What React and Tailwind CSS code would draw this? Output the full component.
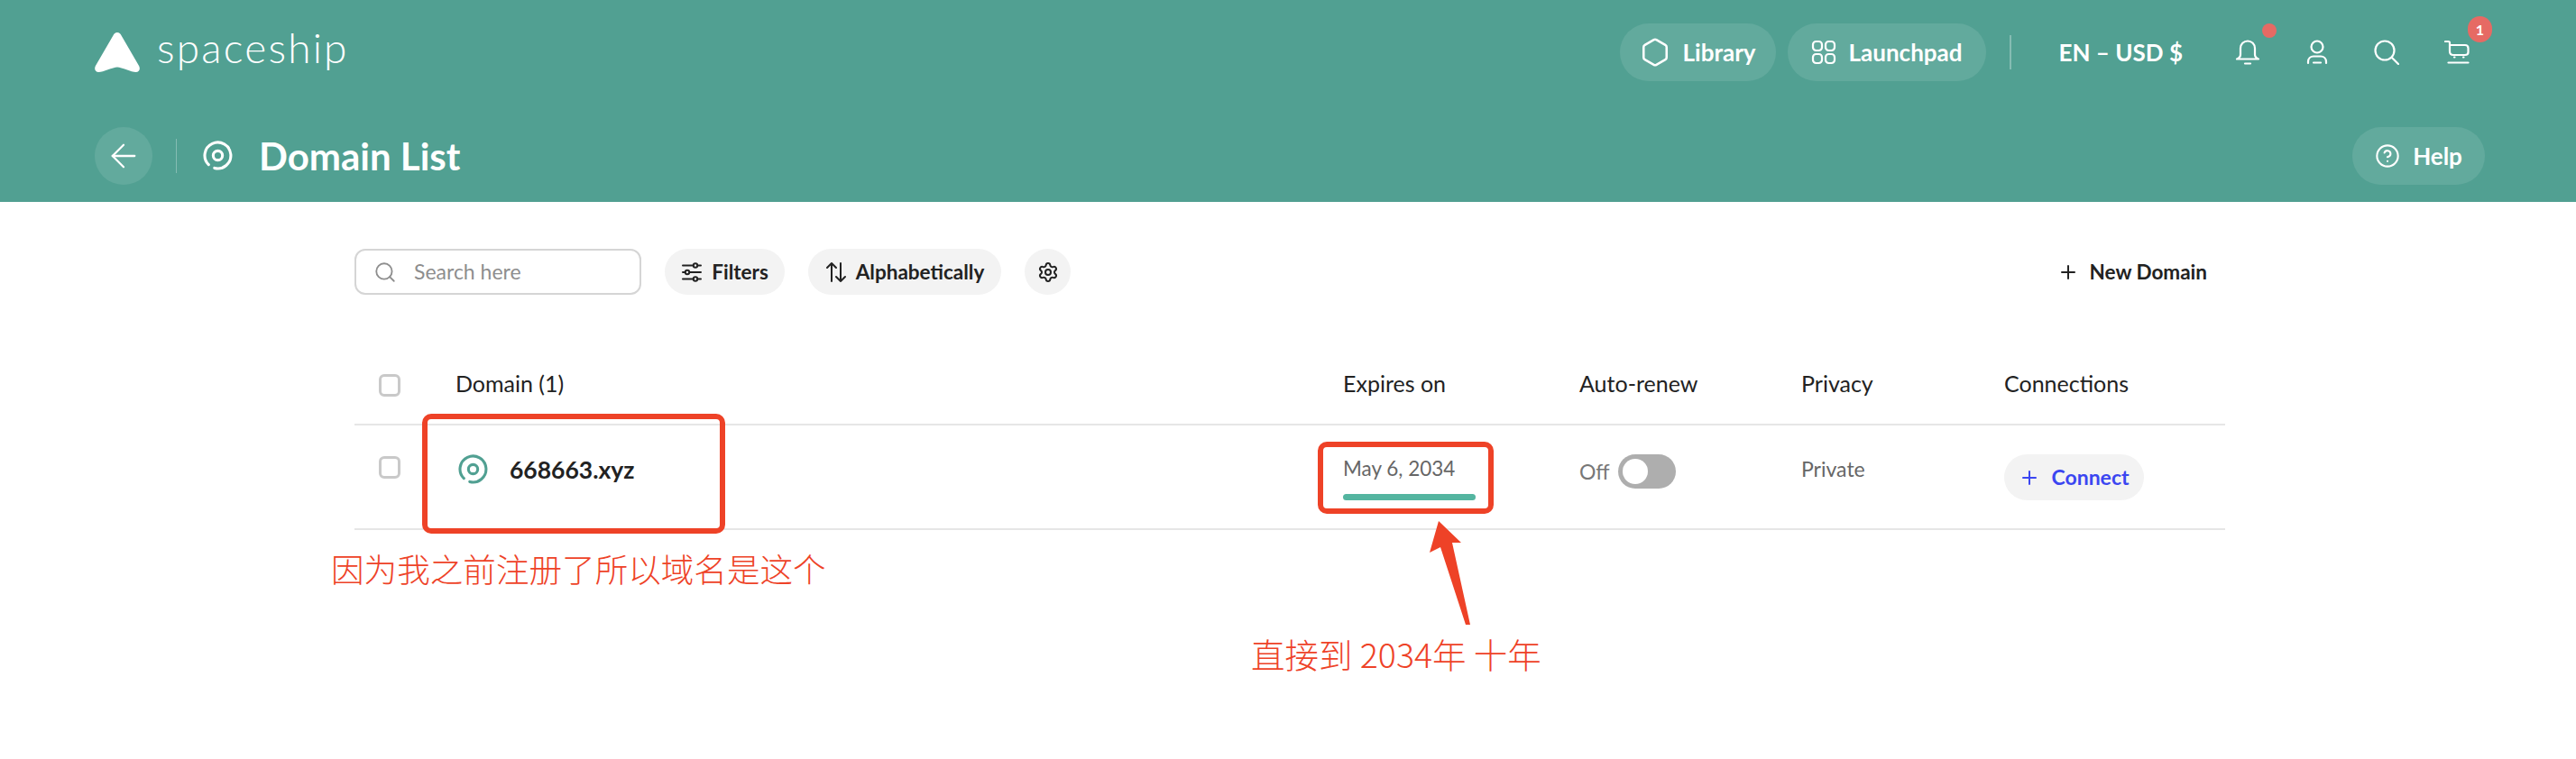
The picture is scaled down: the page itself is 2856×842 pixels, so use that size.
import React from "react";
import { ArrowLeft, CircleHelp, Hexagon, Plus, Search, Settings } from "lucide-react";

const sans = "font-['Lato','Noto_Sans',sans-serif]";

const DomainIcon = ({ className }) => (
  <svg viewBox="0 0 32 32" fill="none" stroke="currentColor" strokeWidth="3" strokeLinecap="round" className={className}>
    <circle cx="16" cy="16" r="5" />
    <path d="M6.100 25.900A14 14 0 1 1 12.400 29.500" />
  </svg>
);

const Logo = () => (
  <svg viewBox="0 0 50 44" className="h-[44px] w-[50px]" fill="white">
    <path d="M25 0c2.200 0 3.600 1.400 4.600 3.600l19.600 33.600c1.600 3.600.2 6.800-3.600 6.800-5 0-15.600-5.600-20.600-5.600S9.400 44 4.400 44C.6 44-.8 40.800.8 37.200L20.400 3.600C21.400 1.400 22.800 0 25 0z" />
  </svg>
);

const GridIcon = () => (
  <svg viewBox="0 0 28 28" fill="none" stroke="white" strokeWidth="2.2" className="h-[28px] w-[28px]">
    <rect x="2" y="2" width="10" height="10" rx="3.500" />
    <rect x="16" y="2" width="10" height="10" rx="3.500" />
    <rect x="2" y="16" width="10" height="10" rx="3.500" />
    <rect x="16" y="16" width="10" height="10" rx="3.500" />
  </svg>
);

const BellIcon = () => (
  <svg viewBox="0 0 28 28" fill="none" stroke="white" strokeWidth="2.2" strokeLinecap="round" strokeLinejoin="round" className="h-[28px] w-[28px]">
    <path d="M14 1.500a8 8 0 0 0-8 8v7c0 2.500-1.500 4-4 5h24c-2.500-1-4-2.500-4-5v-7a8 8 0 0 0-8-8z" />
    <path d="M11 26.500h6" />
  </svg>
);

const UserIcon = () => (
  <svg viewBox="0 0 28 28" fill="none" stroke="white" strokeWidth="2.2" strokeLinecap="round" className="h-[28px] w-[28px]">
    <circle cx="14" cy="8" r="6.500" />
    <path d="M4 26v-1.500c0-3.500 2.500-6 6-6h8c3.500 0 6 2.500 6 6V26" />
    <path d="M10 25.500h8" />
  </svg>
);

const SearchIcon = () => (
  <svg viewBox="0 0 28 28" fill="none" stroke="white" strokeWidth="2.2" strokeLinecap="round" className="h-[28px] w-[28px]">
    <circle cx="12" cy="12" r="10.500" />
    <path d="M20 20l7 7" />
  </svg>
);

const CartIcon = () => (
  <svg viewBox="0 0 28 28" fill="none" stroke="white" strokeWidth="2.2" strokeLinecap="round" strokeLinejoin="round" className="h-[28px] w-[28px]">
    <path d="M1 2h3.500c1 0 1.500.5 1.500 1.500V13c0 2.500 1.500 4 4 4h13c2.500 0 3.500-1 3.500-3V9.500C26.500 7 25.500 6 23 6H6" />
    <path d="M4.500 25.500h22" />
    <path d="M11 19.500h.5M21 19.500h.5" />
  </svg>
);

const SortIcon = () => (
  <svg viewBox="0 0 24 24" fill="none" stroke="#222" strokeWidth="2" strokeLinecap="round" strokeLinejoin="round" className="h-[24px] w-[24px]">
    <path d="M7 22V2M2 7l5-5 5 5" />
    <path d="M17 2v20M12 17l5 5 5-5" />
  </svg>
);

const SlidersIcon = () => (
  <svg viewBox="0 0 24 24" fill="none" stroke="#222" strokeWidth="2" strokeLinecap="round" className="h-[24px] w-[24px]">
    <path d="M2 4.500h20M2 12h20M2 19.500h20" />
    <circle cx="16" cy="4.500" r="2.200" fill="#f3f3f3" />
    <circle cx="7" cy="12" r="2.200" fill="#f3f3f3" />
    <circle cx="16" cy="19.500" r="2.200" fill="#f3f3f3" />
  </svg>
);

const HeaderPill = ({ icon, label, className }) => (
  <button className={`flex h-[64px] items-center gap-[14px] rounded-full bg-white/10 text-[26px] font-bold text-white ${className}`}>
    {icon}
    {label}
  </button>
);

const GrayPill = ({ icon, label, className }) => (
  <button className={`flex h-[51px] items-center gap-[10px] rounded-full bg-[#f3f3f3] text-[22.500px] font-bold text-[#222] ${className}`}>
    {icon}
    {label}
  </button>
);

const Checkbox = () => <div className="h-[25px] w-[24px] rounded-[6px] border-[3px] border-[#c9c9c9] bg-white"></div>;

const rowGrid = "grid grid-cols-[112px_984px_262px_246px_225px_245px]";

const App = () => {
  return (
    <div className={`relative h-[842px] w-[2856px] overflow-hidden bg-white ${sans}`}>
      <header className="flex h-[224px] flex-col justify-between bg-[#51a092] pt-[26px] pr-[101px] pb-[19px] pl-[105px] text-white">
        <div className="flex items-center justify-between pr-[17px]">
          <div className="flex items-center gap-[19px]">
            <Logo />
            <span className="-mt-[10px] text-[46px] leading-none font-light tracking-[2.200px]">spaceship</span>
          </div>
          <div className="flex items-center">
            <HeaderPill icon={<Hexagon size={34} strokeWidth={1.8} />} label="Library" className="w-[173px] justify-center" />
            <HeaderPill icon={<GridIcon />} label="Launchpad" className="ml-[13px] w-[220px] justify-center" />
            <div className="mx-[26px] h-[38px] w-[2px] bg-white/30"></div>
            <span className="ml-[27px] text-[26px] font-bold">EN – USD $</span>
            <div className="relative ml-[58px] h-[28px] w-[28px]">
              <BellIcon />
              <span className="absolute -top-[18px] left-[30px] h-[16px] w-[16px] rounded-full bg-[#e66a64]"></span>
            </div>
            <div className="ml-[49px]"><UserIcon /></div>
            <div className="ml-[49px]"><SearchIcon /></div>
            <div className="relative ml-[50px] h-[28px] w-[28px]">
              <CartIcon />
              <span className="absolute -top-[26px] left-[26px] flex h-[29px] w-[27px] items-center justify-center rounded-full bg-[#e66a64] text-[16px] font-bold">1</span>
            </div>
          </div>
        </div>
        <div className="flex items-center justify-between">
          <div className="flex items-center">
            <button className="flex h-[64px] w-[64px] items-center justify-center rounded-full bg-white/10">
              <ArrowLeft size={42} strokeWidth={1.3} />
            </button>
            <div className="ml-[26px] h-[38px] w-[1px] bg-white/30"></div>
            <DomainIcon className="ml-[29px] -mt-[2px] h-[33px] w-[33px] text-white" />
            <h1 className="ml-[29px] text-[42px] leading-none font-bold">Domain List</h1>
          </div>
          <HeaderPill icon={<CircleHelp size={28} strokeWidth={1.8} />} label="Help" className="w-[147px] justify-center" />
        </div>
      </header>

      <main className="ml-[393px] w-[2074px] pt-[52px]">
        <div className="flex items-center">
          <div className="flex h-[51px] w-[318px] items-center gap-[19px] rounded-[12px] border-2 border-[#d5d5d5] pl-[19px]">
            <Search size={26} strokeWidth={1.7} className="text-[#8e8e8e]" />
            <span className="text-[23px] text-[#8e8e8e]">Search here</span>
          </div>
          <GrayPill icon={<SlidersIcon />} label="Filters" className="ml-[26px] w-[133px] justify-center" />
          <GrayPill icon={<SortIcon />} label="Alphabetically" className="ml-[26px] w-[214px] justify-center" />
          <button className="ml-[26px] flex h-[51px] w-[51px] items-center justify-center rounded-full bg-[#f3f3f3]">
            <Settings size={24} strokeWidth={2} className="text-[#222]" />
          </button>
          <div className="ml-auto flex items-center gap-[12px] pr-[20px] text-[22.500px] font-bold text-[#222]">
            <Plus size={24} strokeWidth={2} />
            New Domain
          </div>
        </div>

        <div className={`${rowGrid} mt-[87px] h-[58px] items-start border-b-2 border-[#e6e6e6] text-[25px] leading-[22px] text-[#222]`}>
          <div className="pt-[1px] pl-[27px]"><Checkbox /></div>
          <span>Domain (1)</span>
          <span>Expires on</span>
          <span>Auto-renew</span>
          <span>Privacy</span>
          <span>Connections</span>
        </div>

        <div className={`${rowGrid} h-[116px] items-start border-b-2 border-[#e6e6e6]`}>
          <div className="pt-[34px] pl-[27px]"><Checkbox /></div>
          <div className="flex items-center gap-[24px] pt-[32px] pl-[3px]">
            <DomainIcon className="h-[33px] w-[33px] text-[#51a092]" />
            <span className="text-[26.500px] leading-[32px] font-bold text-[#222]">668663.xyz</span>
          </div>
          <div className="pt-[32px]">
            <p className="text-[22.500px] leading-[32px] text-[#666]">May 6, 2034</p>
            <div className="mt-[12px] h-[7px] w-[147px] rounded-full bg-[#54b5a0]"></div>
          </div>
          <div className="flex items-center gap-[9px] pt-[32px]">
            <span className="text-[23px] text-[#777]">Off</span>
            <div className="flex h-[38px] w-[64px] items-center rounded-full bg-[#aeaeae] pl-[5px]">
              <div className="h-[28px] w-[28px] rounded-full bg-white"></div>
            </div>
          </div>
          <div className="pt-[32px] text-[23px] leading-[32px] text-[#666]">Private</div>
          <div className="pt-[32px]">
            <button className="flex h-[51px] w-[155px] items-center justify-center gap-[12px] rounded-full bg-[#f3f3f3] text-[23px] font-bold text-[#3b46f1]">
              <Plus size={24} strokeWidth={2} />
              Connect
            </button>
          </div>
        </div>
      </main>

      {/* red annotations drawn over the screenshot */}
      <div className="absolute top-[459px] left-[468px] h-[133px] w-[336px] rounded-[10px] border-[6px] border-[#ee4227]"></div>
      <div className="absolute top-[490px] left-[1461px] h-[80px] w-[195px] rounded-[10px] border-[6px] border-[#ee4227]"></div>
      <svg viewBox="0 0 70 125" className="absolute top-[574px] left-[1575px] h-[125px] w-[70px]" fill="#ee4227">
        <path d="M20 4 45 28 35 28 55 119 50 119 22 33 10 39z" />
      </svg>
      <p className="absolute top-[608px] left-[367px] text-[36.600px] leading-[45px] font-light whitespace-nowrap text-[#ee4227] font-['Noto_Sans_CJK_SC',sans-serif]">因为我之前注册了所以域名是这个</p>
      <p className="absolute top-[702px] left-[1387px] text-[37.500px] leading-[45px] font-light whitespace-nowrap text-[#ee4227] font-['Noto_Sans_CJK_SC',sans-serif]">直接到 2034年 十年</p>
    </div>
  );
};

export default App;
